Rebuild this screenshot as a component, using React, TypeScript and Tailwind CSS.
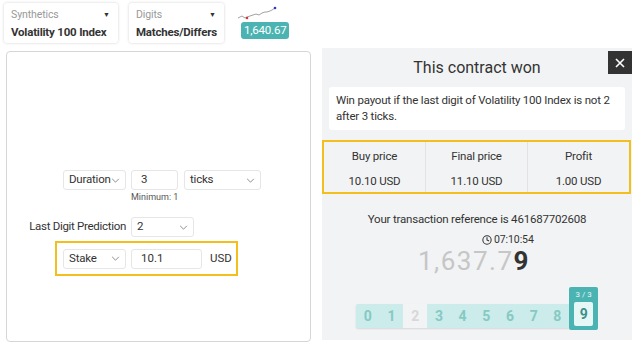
import { Clock } from 'lucide-react'

const font = { fontFamily: 'Roboto, "Noto Sans", sans-serif' }

function Chevron({ className = '' }: { className?: string }) {
  return (
    <svg viewBox="0 0 10 6" className={`h-[5px] w-[9px] shrink-0 ${className}`} fill="none" stroke="#777" strokeWidth="1">
      <path d="M1 1l4 4 4-4" />
    </svg>
  )
}

function Select({ label, width }: { label: string; width: string }) {
  return (
    <div
      className={`flex h-[20px] items-center justify-between whitespace-nowrap rounded-[3px] border border-[#e6e6e6] bg-white pl-[5px] pr-[5px] text-[11.5px] tracking-[-0.2px] text-[#333] ${width}`}
    >
      <span>{label}</span>
      <Chevron />
    </div>
  )
}

function Input({ value, width }: { value: string; width: string }) {
  return (
    <div
      className={`flex h-[20px] items-center rounded-[3px] border border-[#e6e6e6] bg-white pl-[9px] text-[11.5px] text-[#333] ${width}`}
    >
      {value}
    </div>
  )
}

function TopCard({ label, value, width }: { label: string; value: string; width: string }) {
  return (
    <div className={`relative h-[40px] whitespace-nowrap rounded-[3px] bg-white px-[7px] pt-[5px] shadow-[0_0_3px_rgba(0,0,0,0.18)] ${width}`}>
      <div className="text-[10.5px] leading-[14px] tracking-[-0.1px] text-[#999]">{label}</div>
      <div className="mt-[2px] text-[11.5px] font-bold leading-[16px] tracking-[-0.2px] text-[#333]">{value}</div>
      <span className="absolute right-[8px] top-[7px] text-[7px] text-[#333]">▼</span>
    </div>
  )
}

const digits = ['0', '1', '2', '3', '4', '5', '6', '7', '8']

export default function App() {
  return (
    <div className="h-[347px] w-[635px] overflow-hidden whitespace-nowrap bg-white" style={font}>
      <div className="flex h-[48px] items-start gap-[11px] pl-[4px] pt-[3px]">
        <TopCard label="Synthetics" value="Volatility 100 Index" width="w-[114px]" />
        <TopCard label="Digits" value="Matches/Differs" width="w-[95px]" />
        <div className="ml-[2px] flex flex-col items-start">
          <svg width="42" height="16" viewBox="0 0 42 16" className="mt-[2px]">
            <polyline
              points="1,13 5,11 8,13 10,12 13,11 16,10 19,9 22,10 25,8 28,7 30,7 33,6 35,5 38,3"
              fill="none"
              stroke="#8a8a8a"
              strokeWidth="0.8"
            />
            <circle cx="10" cy="13" r="1.3" fill="#d33" />
            <circle cx="38" cy="3" r="1.3" fill="#33c" />
          </svg>
          <div className="ml-[4px] mt-[1px] flex h-[17px] items-center rounded-[3px] bg-[#4bb4b3] px-[3px] text-[11.5px] tracking-[-0.2px] text-white">
            1,640.67
          </div>
        </div>
      </div>

      <div className="flex items-start">
        <div className="ml-[6px] mt-[3px] h-[291px] w-[305px] rounded-[4px] border border-[#d6d6d6] bg-white pt-[118px]">
          <div className="flex gap-[5px] pl-[56px]">
            <Select label="Duration" width="w-[63px]" />
            <Input value="3" width="w-[47px]" />
            <Select label="ticks" width="w-[77px] ml-[1px]" />
          </div>
          <div className="ml-[124px] mt-[1px] w-[47px] text-center text-[9px] leading-[12px] text-[#555]">Minimum: 1</div>
          <div className="mt-[14px] flex items-center gap-[5px]">
            <span className="w-[119px] text-right text-[11.5px] tracking-[-0.3px] text-[#333]">Last Digit Prediction</span>
            <Select label="2" width="w-[63px]" />
          </div>
          <div className="ml-[48px] mt-[4px] flex h-[35px] w-[183px] items-center gap-[5px] border-2 border-[#f3bf1d] pl-[6px]">
            <Select label="Stake" width="w-[63px]" />
            <Input value="10.1" width="w-[71px]" />
            <span className="ml-[3px] text-[11.5px] text-[#333]">USD</span>
          </div>
        </div>

        <div className="relative ml-[11px] h-[292px] w-[310px] bg-[#f2f3f4]">
          <button className="absolute right-0 top-[3px] flex h-[23px] w-[24px] items-center justify-center bg-[#333]">
            <svg viewBox="0 0 10 10" className="h-[10px] w-[10px]" stroke="white" strokeWidth="1.6">
              <path d="M1 1l8 8M9 1l-8 8" />
            </svg>
          </button>
          <div className="pt-[9px] text-center text-[16px] leading-[22px] text-[#333]">This contract won</div>
          <div className="mx-[7px] mt-[8px] h-[43px] whitespace-normal rounded-[3px] bg-white px-[7px] pt-[5px] text-[11.5px] leading-[16px] tracking-[-0.2px] text-[#333]">
            Win payout if the last digit of Volatility 100 Index is not 2 after 3 ticks.
          </div>
          <div className="mt-[10px] flex h-[54px] w-[309px] border-2 border-[#f3bf1d]">
            {[
              ['Buy price', '10.10 USD'],
              ['Final price', '11.10 USD'],
              ['Profit', '1.00 USD'],
            ].map(([label, value], i) => (
              <div
                key={label}
                className={`flex flex-1 flex-col items-center pt-[6px] text-[11.5px] tracking-[-0.2px] text-[#333] ${i < 2 ? 'border-r border-[#e2e2e2]' : ''}`}
              >
                <span className="leading-[16px]">{label}</span>
                <span className="mt-[9px] leading-[16px]">{value}</span>
              </div>
            ))}
          </div>
          <div className="mt-[17px] text-center text-[11.5px] leading-[16px] tracking-[-0.2px] text-[#333]">
            Your transaction reference is 461687702608
          </div>
          <div className="ml-[160px] mt-[6px] flex items-center gap-[2px] text-[10.5px] leading-[14px] tracking-[-0.1px] text-[#333]">
            <Clock className="h-[10px] w-[10px]" strokeWidth={2.5} />
            07:10:54
          </div>
          <div className="pl-[96px] text-[26px] leading-[28px] tracking-[1.5px] text-[#c6c6c6]">
            1,637.7<span className="font-bold tracking-normal text-[#333]">9</span>
          </div>
          <div className="mt-[12px] flex items-end pl-[34px]">
            <div className="flex h-[24px] rounded-l-[2px] bg-[#cbeceb] shadow-[0_1px_2px_rgba(0,0,0,0.12)]">
              {digits.map((d) => (
                <div
                  key={d}
                  className={`flex w-[23.7px] items-center justify-center text-[14px] font-bold ${d === '2' ? 'bg-[#f2f3f4] text-[#d8d8d8]' : 'text-[#86c9c3]'}`}
                >
                  {d}
                </div>
              ))}
            </div>
            <div className="-mb-[2px] flex h-[43px] w-[29px] flex-col items-center rounded-[2px] bg-[#4bb4b3]">
              <span className="mt-[3px] text-[8px] leading-[10px] text-[#e3f6f4]">3 / 3</span>
              <div className="mt-[2px] flex h-[24px] w-[19px] items-center justify-center rounded-[2px] bg-[#e6f7f5] text-[14px] font-bold text-[#3d8f8a]">
                9
              </div>
            </div>
          </div>
        </div>
      </div>
    </div>
  )
}
